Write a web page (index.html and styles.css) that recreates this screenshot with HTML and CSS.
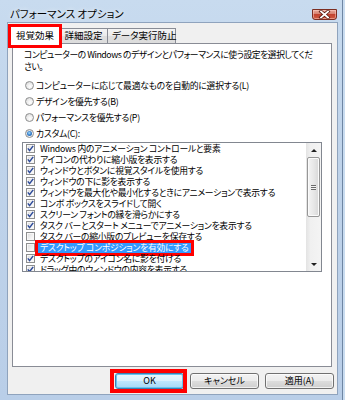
FILE: index.html
```html
<!DOCTYPE html>
<html lang="ja">
<head>
<meta charset="utf-8">
<title>パフォーマンス オプション</title>
<link rel="stylesheet" href="styles.css">
</head>
<body>
<div class="window">
  <div class="titlebar">
    <span class="title">パフォーマンス オプション</span>
    <div class="close">
      <svg width="25" height="11" viewBox="0 0 25 11">
        <path d="M9 2.5 L16 8.5 M16 2.5 L9 8.5" stroke="#5a1c14" stroke-width="3.4" stroke-linecap="square" fill="none"/>
        <path d="M9 2.5 L16 8.5 M16 2.5 L9 8.5" stroke="#ffffff" stroke-width="1.8" stroke-linecap="square" fill="none"/>
      </svg>
    </div>
  </div>
  <div class="client">
    <div class="tabs">
      <div class="tab active">視覚効果<span class="mark mark-tab"></span></div>
      <div class="tab">詳細設定</div>
      <div class="tab">データ実行防止</div>
    </div>
    <div class="panel">
      <p class="desc">コンピューターの Windows のデザインとパフォーマンスに使う設定を選択してくだ<br>さい。</p>
      <div class="radios">
        <div class="radio"><span class="rb"></span><span>コンピューターに応じて最適なものを自動的に選択する(L)</span></div>
        <div class="radio"><span class="rb"></span><span>デザインを優先する(B)</span></div>
        <div class="radio"><span class="rb"></span><span>パフォーマンスを優先する(P)</span></div>
        <div class="radio"><span class="rb on"></span><span>カスタム(C):</span></div>
      </div>
      <div class="listbox">
        <div class="items">
          <div class="item"><span class="cb"><svg viewBox="0 0 7 7"><path d="M0.8 3.4 L2.6 5.6 L6.2 0.9"/></svg></span><span class="txt">Windows 内のアニメーション コントロールと要素</span></div>
          <div class="item"><span class="cb"><svg viewBox="0 0 7 7"><path d="M0.8 3.4 L2.6 5.6 L6.2 0.9"/></svg></span><span class="txt">アイコンの代わりに縮小版を表示する</span></div>
          <div class="item"><span class="cb"><svg viewBox="0 0 7 7"><path d="M0.8 3.4 L2.6 5.6 L6.2 0.9"/></svg></span><span class="txt">ウィンドウとボタンに視覚スタイルを使用する</span></div>
          <div class="item"><span class="cb"><svg viewBox="0 0 7 7"><path d="M0.8 3.4 L2.6 5.6 L6.2 0.9"/></svg></span><span class="txt">ウィンドウの下に影を表示する</span></div>
          <div class="item"><span class="cb"><svg viewBox="0 0 7 7"><path d="M0.8 3.4 L2.6 5.6 L6.2 0.9"/></svg></span><span class="txt">ウィンドウを最大化や最小化するときにアニメーションで表示する</span></div>
          <div class="item"><span class="cb"><svg viewBox="0 0 7 7"><path d="M0.8 3.4 L2.6 5.6 L6.2 0.9"/></svg></span><span class="txt">コンボ ボックスをスライドして開く</span></div>
          <div class="item"><span class="cb"><svg viewBox="0 0 7 7"><path d="M0.8 3.4 L2.6 5.6 L6.2 0.9"/></svg></span><span class="txt">スクリーン フォントの縁を滑らかにする</span></div>
          <div class="item"><span class="cb"><svg viewBox="0 0 7 7"><path d="M0.8 3.4 L2.6 5.6 L6.2 0.9"/></svg></span><span class="txt">タスク バーとスタート メニューでアニメーションを表示する</span></div>
          <div class="item"><span class="cb"></span><span class="txt">タスク バーの縮小版のプレビューを保存する</span></div>
          <div class="item"><span class="cb"></span><span class="txt sel">デスクトップ コンポジションを有効にする<span class="mark mark-item"></span></span></div>
          <div class="item"><span class="cb"><svg viewBox="0 0 7 7"><path d="M0.8 3.4 L2.6 5.6 L6.2 0.9"/></svg></span><span class="txt">デスクトップのアイコン名に影を付ける</span></div>
          <div class="item"><span class="cb"><svg viewBox="0 0 7 7"><path d="M0.8 3.4 L2.6 5.6 L6.2 0.9"/></svg></span><span class="txt">ドラッグ中のウィンドウの内容を表示する</span></div>
        </div>
        <div class="scrollbar">
          <div class="sb-btn"><span class="arrow up"></span></div>
          <div class="thumb"><span class="grip"></span></div>
          <div class="track"></div>
          <div class="sb-btn"><span class="arrow down"></span></div>
        </div>
      </div>
    </div>
    <div class="buttons">
      <div class="btn default">OK<span class="mark mark-ok"></span></div>
      <div class="btn">キャンセル</div>
      <div class="btn">適用(A)</div>
    </div>
  </div>
</div>
</body>
</html>
```

FILE: styles.css
```css
* { box-sizing: border-box; }
html, body { margin: 0; padding: 0; }
body {
  width: 345px;
  height: 400px;
  overflow: hidden;
  background: #c7daef;
  font-family: "Noto Sans CJK JP", "Noto Sans", sans-serif;
  font-size: 9px;
  font-feature-settings: "palt";
  color: #000;
}
.window {
  width: 345px;
  height: 400px;
  display: flex;
  flex-direction: column;
  background: linear-gradient(180deg, #c8dbef 0, #bfd3ea 40%, #b9cee8 100%);
  box-shadow: inset -2px 0 0 #c9dcf0, inset -3px 0 0 #6f86a3;
}
.titlebar {
  height: 22px;
  flex: none;
  display: flex;
  justify-content: space-between;
  align-items: flex-start;
}
.title {
  margin: 8px 0 0 10px;
  font-size: 10.5px;
  line-height: 12px;
  color: #000;
  text-shadow: 0 0 4px rgba(255,255,255,0.9);
}
.close {
  margin: 9px 8px 0 0;
  width: 25px;
  height: 11px;
  border: 1px solid #7c2e22;
  border-radius: 0 0 3px 3px;
  background: linear-gradient(180deg, #e9a99a 0, #d6806e 45%, #c2432f 50%, #cf5a40 100%);
  box-shadow: inset 0 0 0 1px rgba(255,210,200,0.5);
  display: flex;
  align-items: center;
  justify-content: center;
  overflow: hidden;
}
.close svg { display: block; margin: -1px; }
.client {
  flex: 1;
  margin: 0 7px 5px 7px;
  background: #f0f0f0;
  border: 1px solid #8fa3bd;
  display: flex;
  flex-direction: column;
}
.tabs {
  display: flex;
  align-items: flex-end;
  height: 17px;
  margin-top: 3px;
  padding-left: 2px;
  font-size: 9.5px;
}
.tab {
  height: 15px;
  padding: 0 4px;
  border: 1px solid #898c95;
  border-bottom: none;
  border-left: none;
  background: linear-gradient(180deg, #f4f4f4 0, #eaeaea 50%, #dedede 51%, #dcdcdc 100%);
  line-height: 13px;
  text-align: center;
  white-space: nowrap;
}
.tab:nth-child(2) { width: 48px; border-left: none; }
.tab:nth-child(3) { width: 68px; }
.tab.active {
  position: relative;
  z-index: 2;
  width: 50px;
  height: 19px;
  margin-bottom: -2px;
  border-left: 1px solid #898c95;
  background: #fff;
  line-height: 17px;
}
.mark {
  position: absolute;
  border: 3px solid #ff0000;
  pointer-events: none;
}
.mark-tab { top: -3px; left: -3px; right: -3px; bottom: -3px; }
.panel {
  margin-left: 4px;
  width: 320px;
  height: 324px;
  background: #fff;
  border: 1px solid #898c95;
  flex: none;
  font-size: 8.8px;
  letter-spacing: -0.25px;
}
.desc {
  margin: 5px 0 0 0;
  padding-left: 11px;
  line-height: 12px;
  white-space: nowrap;
  letter-spacing: -0.45px;
}
.radios {
  margin-top: 4px;
  padding-left: 12px;
}
.radio {
  height: 16px;
  display: flex;
  align-items: center;
  white-space: nowrap;
}
.rb {
  width: 9px;
  height: 9px;
  margin-right: 2px;
  border-radius: 50%;
  border: 1px solid #8e8f8f;
  background: radial-gradient(circle at 60% 65%, #ffffff 0, #f0f0f0 40%, #d2d2d2 100%);
  display: flex;
  align-items: center;
  justify-content: center;
  flex: none;
}
.rb.on::after {
  content: "";
  width: 5px;
  height: 5px;
  border-radius: 50%;
  background: radial-gradient(circle at 45% 40%, #a9e1ff 0, #3d86d1 45%, #1d4f93 100%);
}
.listbox {
  margin: 1px 0 0 9px;
  width: 300px;
  height: 130px;
  border: 1px solid #828790;
  display: flex;
  background: #fff;
}
.items {
  flex: 1;
  overflow: hidden;
  padding-left: 3px;
}
.item {
  height: 11px;
  display: flex;
  align-items: center;
  white-space: nowrap;
}
.cb {
  width: 9px;
  height: 9px;
  flex: none;
  margin-right: 3px;
  border: 1px solid #8e8f8f;
  background: linear-gradient(135deg, #dadada 0, #f2f2f2 60%, #ffffff 100%);
  box-shadow: inset 0 0 0 1px #f7f7f7;
  display: block;
}
.cb svg {
  display: block;
  width: 7px;
  height: 7px;
  fill: none;
  stroke: #2c4a99;
  stroke-width: 1.5;
}
.txt {
  padding: 0 2px;
  line-height: 11px;
  position: relative;
}
.txt.sel {
  background: #3399ff;
  color: #fff;
}
.mark-item { top: -2px; left: -3px; right: -3px; bottom: -3px; }
.scrollbar {
  width: 15px;
  flex: none;
  display: flex;
  flex-direction: column;
  background: linear-gradient(90deg, #e3e3e3 0, #f0f0f0 30%, #f4f4f4 100%);
}
.sb-btn {
  height: 14px;
  display: flex;
  align-items: center;
  justify-content: center;
}
.arrow { width: 0; height: 0; border-left: 3px solid transparent; border-right: 3px solid transparent; }
.arrow.up { border-bottom: 3px solid #202020; }
.arrow.down { border-top: 3px solid #202020; }
.thumb {
  height: 60px;
  margin: 0 1px;
  border: 1px solid #979797;
  border-radius: 2px;
  background: linear-gradient(90deg, #f4f4f4 0, #e8e8e8 50%, #d8d8d8 100%);
  box-shadow: inset 0 0 0 1px #fbfbfb;
  display: flex;
  align-items: center;
  justify-content: center;
}
.grip {
  width: 5px;
  height: 5px;
  background: repeating-linear-gradient(180deg, #6b6b6b 0 1px, #f4f4f4 1px 2px);
}
.track { flex: 1; }
.buttons {
  margin-top: 6px;
  height: 16px;
  display: flex;
  justify-content: flex-end;
  gap: 6px;
  padding-right: 3px;
}
.btn {
  width: 69px;
  height: 16px;
  border: 1px solid #707070;
  border-radius: 3px;
  background: linear-gradient(180deg, #f3f3f3 0, #ebebeb 50%, #dddddd 51%, #cfcfcf 100%);
  box-shadow: inset 0 0 0 1px rgba(255,255,255,0.7);
  text-align: center;
  line-height: 14px;
  position: relative;
}
.btn.default {
  border-color: #3c7fb1;
  background: linear-gradient(180deg, #eaf6fd 0, #d9f0fc 50%, #bee6fd 51%, #a7d9f5 100%);
  box-shadow: inset 0 0 0 1px #67c3ef;
}
.mark-ok { top: -5px; left: -6px; right: -4px; bottom: -5px; border-width: 4px; }
```
